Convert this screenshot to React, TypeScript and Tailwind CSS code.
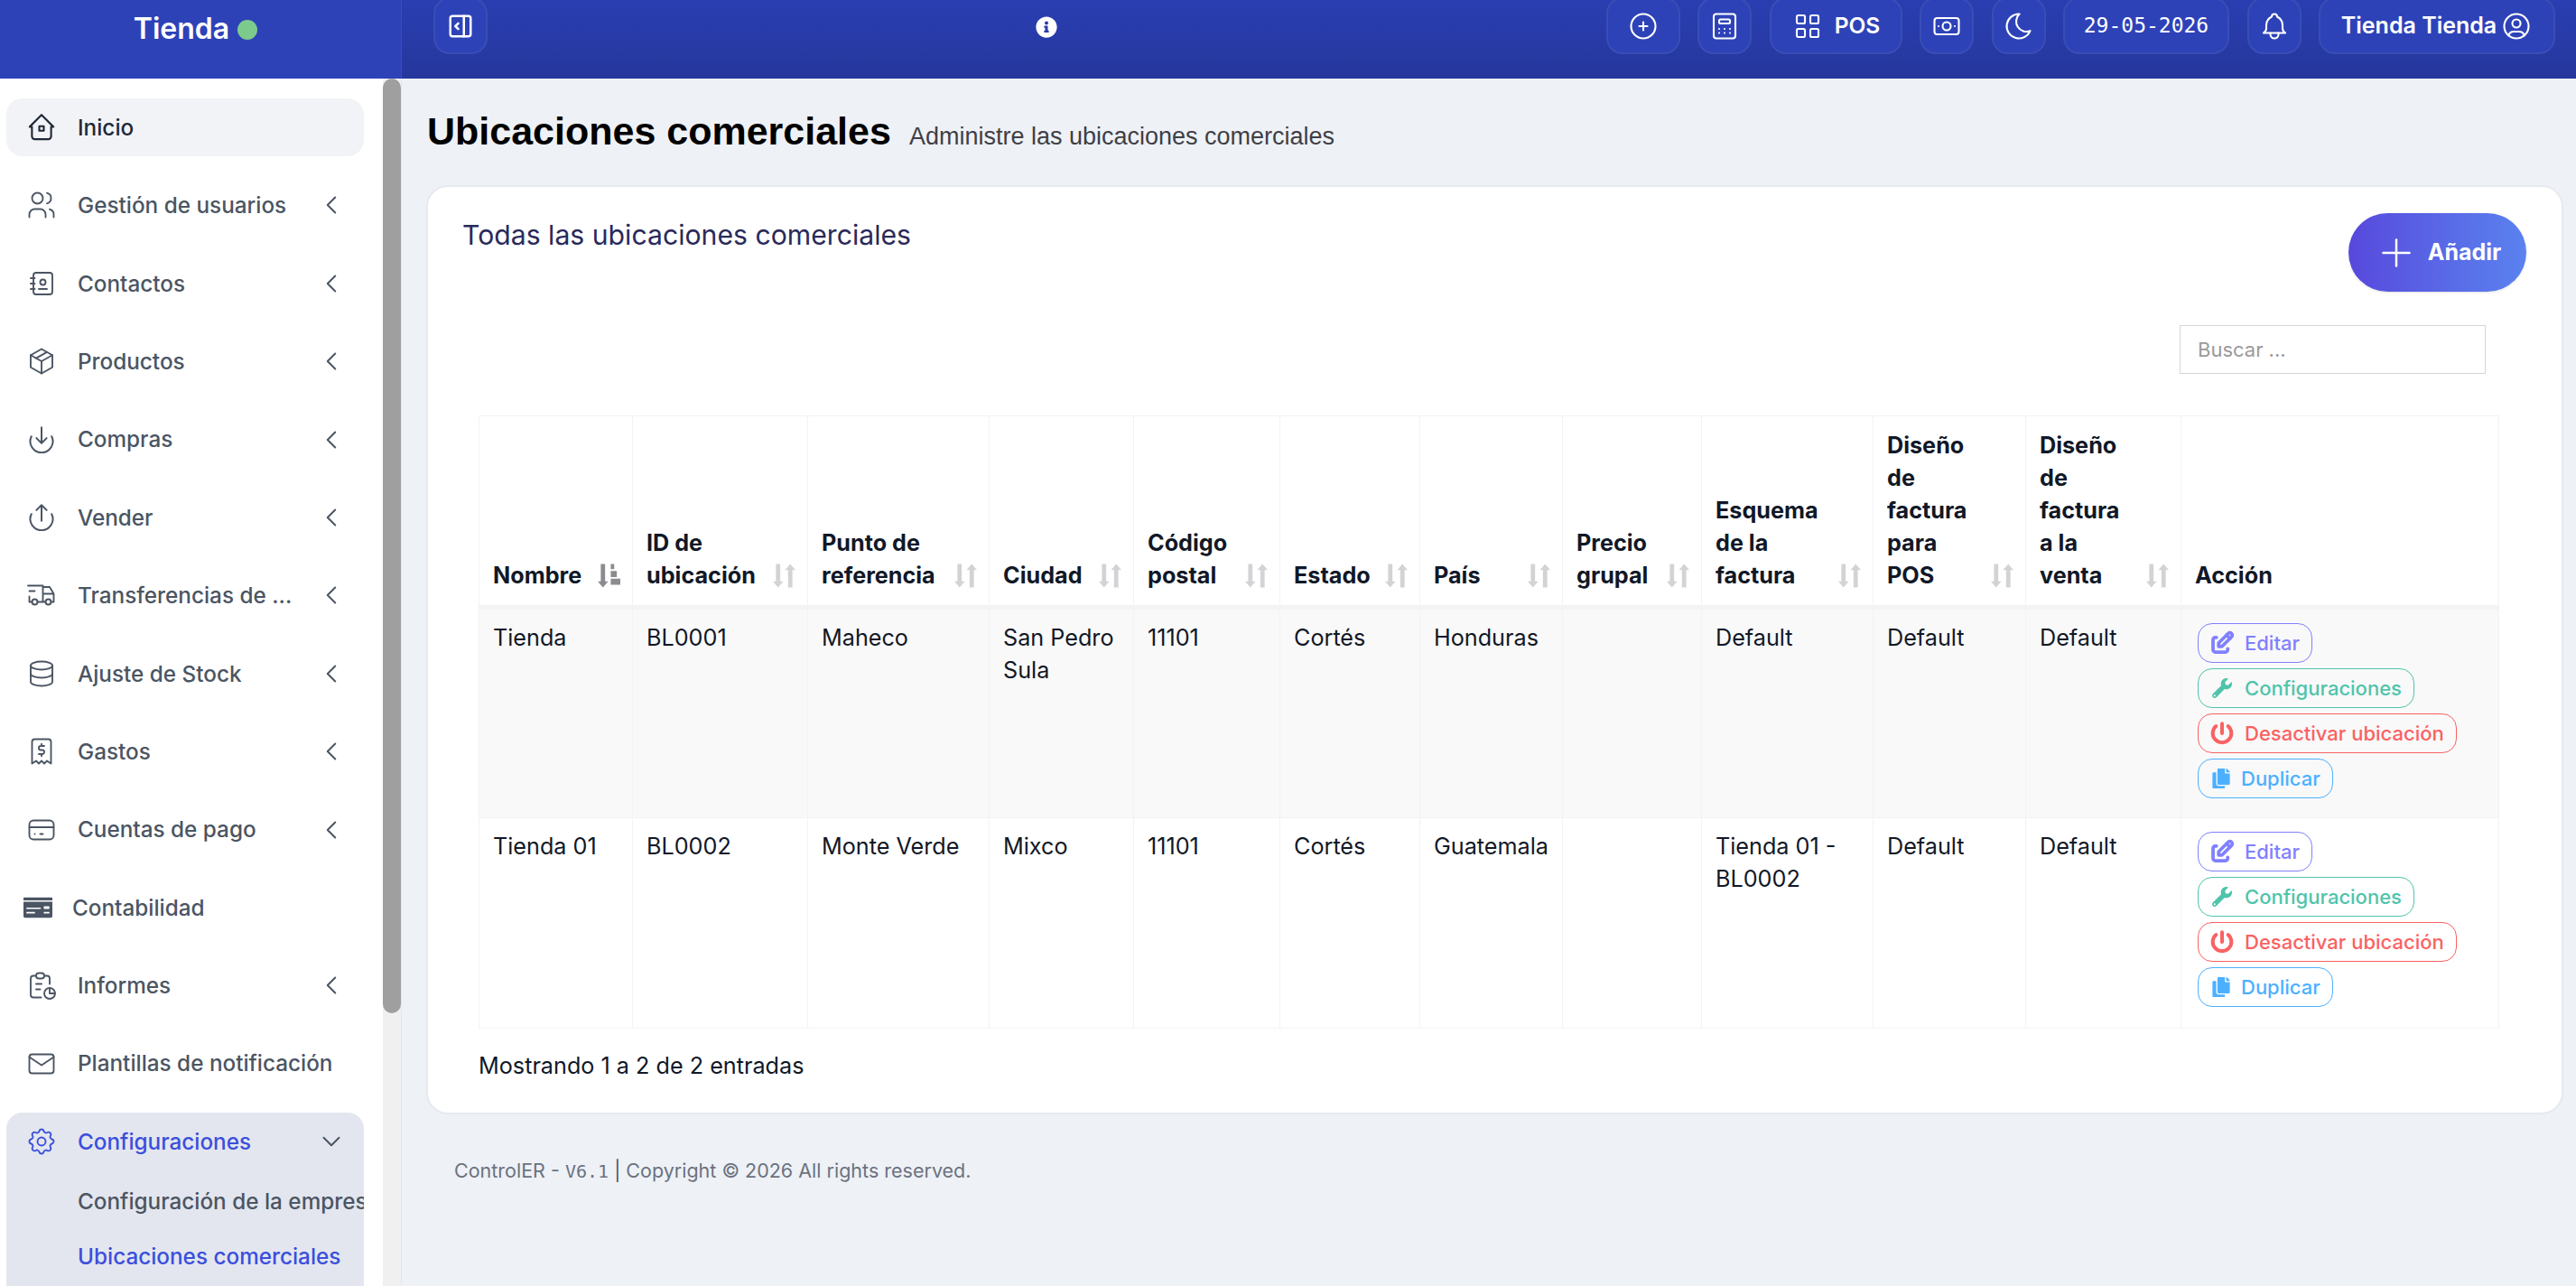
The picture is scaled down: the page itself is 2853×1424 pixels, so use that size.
import type { ReactNode } from "react";
import {
  TbBell,
  TbCalculator,
  TbCashBanknote,
  TbChevronDown,
  TbChevronLeft,
  TbCirclePlus,
  TbCreditCard,
  TbDatabase,
  TbEdit,
  TbAddressBook,
  TbLayoutGrid,
  TbMail,
  TbMoon,
  TbPackage,
  TbPlus,
  TbPower,
  TbReceipt2,
  TbReport,
  TbSettings,
  TbTruckDelivery,
  TbUserCircle,
  TbUsers,
} from "react-icons/tb";
import { FaCopy, FaInfoCircle, FaMoneyCheck, FaWrench } from "react-icons/fa";

const HomeIcon = () => (
  <svg viewBox="0 0 24 24" className="h-[30px] w-[30px]" fill="none" stroke="currentColor" strokeWidth="1.7" strokeLinejoin="round" strokeLinecap="round">
    <path d="M1.5 11.5 12 1l10.5 10.5h-2V20a2.5 2.5 0 0 1-2.5 2.5H6A2.5 2.5 0 0 1 3.5 20v-8.5z" />
    <rect x="10" y="11" width="4" height="4" />
  </svg>
);

const DownCircle = () => (
  <svg viewBox="0 0 24 24" className="h-[30px] w-[30px]" fill="none" stroke="currentColor" strokeWidth="1.6" strokeLinecap="round" strokeLinejoin="round">
    <path d="M3 9a10 10 0 1 0 18 0" />
    <path d="M12 1v14M7.5 10.5 12 15l4.5-4.5" />
  </svg>
);

const UpCircle = () => (
  <svg viewBox="0 0 24 24" className="h-[30px] w-[30px]" fill="none" stroke="currentColor" strokeWidth="1.6" strokeLinecap="round" strokeLinejoin="round">
    <path d="M3 9a10 10 0 1 0 18 0" />
    <path d="M12 15V1M7.5 5.5 12 1l4.5 4.5" />
  </svg>
);

const PanelIcon = () => (
  <svg viewBox="0 0 24 24" className="h-[30px] w-[30px]" fill="none" stroke="currentColor" strokeWidth="2" strokeLinecap="round" strokeLinejoin="round">
    <rect x="3" y="3" width="18" height="18" rx="2" />
    <path d="M15 3v18M10 9.5 7.5 12l2.5 2.5" />
  </svg>
);

const SortIcon = () => (
  <svg viewBox="0 0 26 27" className="h-[27px] w-[25px] text-[#d3d3d6]" fill="currentColor">
    <path d="M3.5 0h5v20h3.5l-6 7-6-7h3.5z" />
    <path d="M22.5 27h-5V7H14l6-7 6 7h-3.5z" />
  </svg>
);

const SortActiveIcon = () => (
  <svg viewBox="0 0 26 27" className="h-[27px] w-[25px] text-[#8c8c90]" fill="currentColor">
    <path d="M3.5 0h5v20h3.5l-6 7-6-7h3.5z" />
    <path d="M15 0h4v6h-4zM15 8h7v7h-7zM15 17h11v7H15z" />
  </svg>
);

type NavItem = { label: string; icon: ReactNode; chevron?: boolean; active?: boolean };

const cls = "h-[36px] w-[36px] shrink-0";
const topCls = "h-[36px] w-[36px] shrink-0";
const navItems: NavItem[] = [
  { label: "Inicio", icon: <HomeIcon />, active: true },
  { label: "Gestión de usuarios", icon: <TbUsers className={cls} strokeWidth={1.25} />, chevron: true },
  { label: "Contactos", icon: <TbAddressBook className={cls} strokeWidth={1.25} />, chevron: true },
  { label: "Productos", icon: <TbPackage className={cls} strokeWidth={1.25} />, chevron: true },
  { label: "Compras", icon: <DownCircle />, chevron: true },
  { label: "Vender", icon: <UpCircle />, chevron: true },
  { label: "Transferencias de ...", icon: <TbTruckDelivery className={cls} strokeWidth={1.25} />, chevron: true },
  { label: "Ajuste de Stock", icon: <TbDatabase className={cls} strokeWidth={1.25} />, chevron: true },
  { label: "Gastos", icon: <TbReceipt2 className={cls} strokeWidth={1.25} />, chevron: true },
  { label: "Cuentas de pago", icon: <TbCreditCard className={cls} strokeWidth={1.25} />, chevron: true },
];

type Row = {
  nombre: string;
  id: string;
  punto: string;
  ciudad: string;
  cp: string;
  estado: string;
  pais: string;
  esquema: string;
};

const rows: Row[] = [
  { nombre: "Tienda", id: "BL0001", punto: "Maheco", ciudad: "San Pedro Sula", cp: "11101", estado: "Cortés", pais: "Honduras", esquema: "Default" },
  { nombre: "Tienda 01", id: "BL0002", punto: "Monte Verde", ciudad: "Mixco", cp: "11101", estado: "Cortés", pais: "Guatemala", esquema: "Tienda 01 - BL0002" },
];

const columns: { label: string; width: number }[] = [
  { label: "Nombre", width: 170 },
  { label: "ID de ubicación", width: 194 },
  { label: "Punto de referencia", width: 201 },
  { label: "Ciudad", width: 160 },
  { label: "Código postal", width: 162 },
  { label: "Estado", width: 155 },
  { label: "País", width: 158 },
  { label: "Precio grupal", width: 154 },
  { label: "Esquema de la factura", width: 190 },
  { label: "Diseño de factura para POS", width: 169 },
  { label: "Diseño de factura a la venta", width: 172 },
  { label: "Acción", width: 352 },
];

function Nav({ item }: { item: NavItem }) {
  return (
    <div className={`flex h-[64px] items-center rounded-[18px] pl-[24px] pr-[19px] ${item.active ? "bg-[#f2f3f7] text-[#1f2937]" : "text-[#4b5563]"}`}>
      <span className="flex w-[30px] justify-center">{item.icon}</span>
      <span className="ml-[25px] flex-1 truncate text-[24.3px] font-medium">{item.label}</span>
      {item.chevron && <TbChevronLeft className="h-[34px] w-[34px]" strokeWidth={1.4} />}
    </div>
  );
}

function TopButton({ children, className = "" }: { children: ReactNode; className?: string }) {
  return (
    <div className={`-mt-[3px] flex h-[63px] items-center justify-center gap-[12px] rounded-[18px] border-2 border-[#3a4db4] bg-[#2e42b8] text-white ${className}`}>
      {children}
    </div>
  );
}

function ActionButton({ icon, label, className }: { icon: ReactNode; label: string; className: string }) {
  return (
    <div className={`flex h-[44px] w-fit items-center rounded-[16px] border-[1.5px] pl-[15px] pr-[13px] text-[22px] font-medium ${className}`}>
      {icon}
      <span>{label}</span>
    </div>
  );
}

function Actions() {
  return (
    <div className="flex flex-col gap-[6px]">
      <ActionButton icon={<TbEdit className="-ml-[4px] mr-[10px] h-[30px] w-[30px]" strokeWidth={3} />} label="Editar" className="border-[#8080ff] text-[#8080ff]" />
      <ActionButton icon={<FaWrench className="mr-[14px] h-[22px] w-[22px]" />} label="Configuraciones" className="border-[#4fc4ab] text-[#4fc4ab]" />
      <ActionButton icon={<TbPower className="-ml-[5px] mr-[9px] h-[32px] w-[32px]" strokeWidth={3} />} label="Desactivar ubicación" className="border-[#f96262] text-[#f96262]" />
      <ActionButton icon={<FaCopy className="mr-[12px] h-[22px] w-[20px]" />} label="Duplicar" className="border-[#4db0ff] text-[#4db0ff]" />
    </div>
  );
}

export default function App() {
  return (
    <div className="flex h-screen flex-col overflow-hidden bg-[#eef1f6] font-['Inter',sans-serif]">
      {/* Top bar */}
      <header className="flex h-[87px] shrink-0 bg-gradient-to-b from-[#2a3eb2] to-[#25379c]">
        <div className="flex w-[445px] shrink-0 items-start justify-center gap-[9px] border-r border-[#3a4db4] bg-[#2e42b8] pt-[10px] pr-[11px]">
          <span className="text-[32px] font-semibold leading-[44px] text-white">Tienda</span>
          <span className="mt-[12px] h-[22px] w-[22px] rounded-full bg-[#7dcb8c]" />
        </div>
        <div className="flex flex-1 items-start pl-[35px] pr-[23px]">
          <TopButton className="w-[60px]"><PanelIcon /></TopButton>
          <div className="ml-[607px] mt-[18px] text-white"><FaInfoCircle className="h-[24px] w-[24px]" /></div>
          <div className="ml-auto flex gap-[19.5px]">
            <TopButton className="w-[82px]"><TbCirclePlus className={topCls} strokeWidth={1.4} /></TopButton>
            <TopButton className="w-[60px]"><TbCalculator className={topCls} strokeWidth={1.4} /></TopButton>
            <TopButton className="w-[147px]"><TbLayoutGrid className={topCls} strokeWidth={1.4} /><span className="text-[24.5px] font-semibold">POS</span></TopButton>
            <TopButton className="w-[60px]"><TbCashBanknote className={topCls} strokeWidth={1.4} /></TopButton>
            <TopButton className="w-[60px]"><TbMoon className={topCls} strokeWidth={1.4} /></TopButton>
            <TopButton className="w-[184px]"><span className="font-['DejaVu_Sans_Mono',monospace] text-[23px]">29-05-2026</span></TopButton>
            <TopButton className="w-[60px]"><TbBell className={topCls} strokeWidth={1.4} /></TopButton>
            <TopButton className="w-[262px] !gap-[4px]"><span className="text-[25px] font-semibold">Tienda Tienda</span><TbUserCircle className={topCls} strokeWidth={1.4} /></TopButton>
          </div>
        </div>
      </header>

      <div className="flex min-h-0 flex-1">
        {/* Sidebar */}
        <aside className="flex w-[445px] shrink-0 border-r border-[#e4e7ee] bg-white">
          <div className="flex w-[424px] shrink-0 flex-col gap-[22.4px] overflow-hidden pl-[7px] pr-[21px] pt-[22px]">
            {navItems.map((item) => (
              <Nav key={item.label} item={item} />
            ))}
            <div className="flex h-[64px] items-center pl-[19px] text-[#4b5563]">
              <FaMoneyCheck className="h-[32px] w-[32px]" />
              <span className="ml-[22px] text-[24.3px] font-medium">Contabilidad</span>
            </div>
            <Nav item={{ label: "Informes", icon: <TbReport className={cls} strokeWidth={1.25} />, chevron: true }} />
            <Nav item={{ label: "Plantillas de notificación", icon: <TbMail className={cls} strokeWidth={1.25} /> }} />
            <div className="flex-1 overflow-hidden rounded-t-[18px] bg-[#e3e6ee]">
              <div className="flex h-[64px] items-center pl-[21px] pr-[19px] text-[#3b4fdc]">
                <TbSettings className={cls} strokeWidth={1.25} />
                <span className="ml-[22px] flex-1 text-[24.3px] font-medium">Configuraciones</span>
                <TbChevronDown className="h-[34px] w-[34px] text-[#4b5563]" strokeWidth={1.4} />
              </div>
              <div className="mt-[4px] whitespace-nowrap pl-[79px] text-[24.3px] font-medium leading-[61px] text-[#4b5563]">
                <div>Configuración de la empresa</div>
                <div className="text-[#3b4fdc]">Ubicaciones comerciales</div>
              </div>
            </div>
          </div>
          <div className="flex-1 bg-[#f0f0f0]">
            <div className="h-[1035px] rounded-[10px] bg-[#9f9f9f]" />
          </div>
        </aside>

        {/* Main */}
        <main className="min-w-0 flex-1 pl-[27px] pr-[14px]">
          <div className="flex h-[118px] items-baseline gap-[20px] pl-[1px] pt-[26px] font-['Liberation_Sans',sans-serif]">
            <h1 className="text-[43px] font-bold text-black">Ubicaciones comerciales</h1>
            <span className="text-[27px] text-[#3f3f46]">Administre las ubicaciones comerciales</span>
          </div>

          <section className="h-[1029px] rounded-[24px] border-2 border-[#e6e9f0] bg-white pl-[38px] pr-[38px]">
            <div className="flex items-start justify-between pt-[29px]">
              <h3 className="pt-[2px] text-[30.2px] text-[#2a2a5a]">Todas las ubicaciones comerciales</h3>
              <button className="mr-[1px] flex h-[87px] w-[197px] items-center justify-center gap-[10px] rounded-full bg-gradient-to-r from-[#5748dc] to-[#5a82ef] text-[25px] font-bold text-white shadow-sm">
                <TbPlus className="h-[50px] w-[50px]" strokeWidth={1.2} />
                Añadir
              </button>
            </div>

            <div className="mt-[37px] flex justify-end pr-[46px]">
              <div className="flex h-[54px] w-[339px] items-center border-[1.5px] border-[#d6d6da] pl-[19px] text-[22px] text-[#9a9a9a]">Buscar ...</div>
            </div>

            <table className="ml-[18px] mt-[46px] w-[2237px] table-fixed border-collapse text-[25.2px] leading-[36px] text-[#111827]">
              <colgroup>
                {columns.map((c) => (
                  <col key={c.label} style={{ width: c.width }} />
                ))}
              </colgroup>
              <thead>
                <tr className="h-[212px]">
                  {columns.map((c, i) => (
                    <th key={c.label} className="border border-b-[5px] border-[#f3f3f3] pb-[15px] pl-[15px] pr-[13px] align-bottom text-left font-bold">
                      <div className="flex items-end justify-between gap-[14px]">
                        <span>{c.label}</span>
                        {i === 0 ? (
                          <span className="-ml-[12px] mb-[4px] shrink-0"><SortActiveIcon /></span>
                        ) : i < 11 ? (
                          <span className="mb-[4px] shrink-0"><SortIcon /></span>
                        ) : null}
                      </div>
                    </th>
                  ))}
                </tr>
              </thead>
              <tbody>
                {rows.map((r, i) => (
                  <tr key={r.id} className={`h-[233px] ${i === 0 ? "bg-[#f9f9f9]" : "bg-white"}`}>
                    {[r.nombre, r.id, r.punto, r.ciudad, r.cp, r.estado, r.pais, "", r.esquema, "Default", "Default"].map((v, j) => (
                      <td key={j} className="border border-[#f3f3f3] px-[15px] pt-[13px] align-top">{v}</td>
                    ))}
                    <td className="border border-[#f3f3f3] pl-[18px] pt-[15px] align-top"><Actions /></td>
                  </tr>
                ))}
              </tbody>
            </table>

            <p className="ml-[18px] mt-[23px] text-[25.2px] leading-[36px] text-[#111827]">Mostrando 1 a 2 de 2 entradas</p>
          </section>

          <footer className="mt-[46px] pl-[31px] text-[21.5px] text-[#6b7280]">
            ControlER - <span className="font-['DejaVu_Sans_Mono',monospace] text-[20px]">V6.1</span> <span className="text-[#4b5563]">|</span> Copyright © 2026 All rights reserved.
          </footer>
        </main>
      </div>
    </div>
  );
}
